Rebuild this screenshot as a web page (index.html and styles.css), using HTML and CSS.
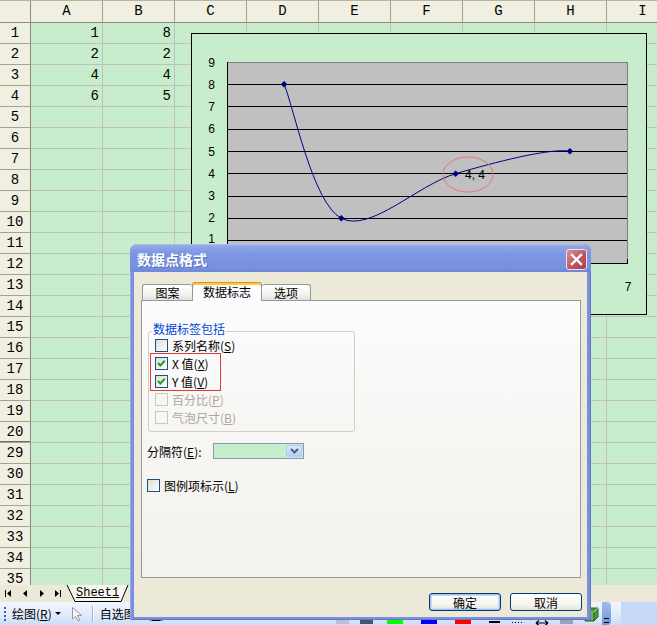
FILE: index.html
```html
<!DOCTYPE html>
<html lang="zh-CN">
<head>
<meta charset="utf-8">
<title>数据点格式</title>
<link rel="stylesheet" href="styles.css">
</head>
<body>
<div class="app">
  <div class="sheet">
    <div class="hrow">
      <div class="corner"></div>
      <div class="ch">A</div><div class="ch">B</div><div class="ch">C</div><div class="ch">D</div><div class="ch">E</div><div class="ch">F</div><div class="ch">G</div><div class="ch">H</div><div class="ch">I</div>
    </div>
    <div class="row"><div class="rh">1</div><div class="c">1</div><div class="c">8</div><div class="c"></div><div class="c"></div><div class="c"></div><div class="c"></div><div class="c"></div><div class="c"></div><div class="c"></div></div>
    <div class="row"><div class="rh">2</div><div class="c">2</div><div class="c">2</div><div class="c"></div><div class="c"></div><div class="c"></div><div class="c"></div><div class="c"></div><div class="c"></div><div class="c"></div></div>
    <div class="row"><div class="rh">3</div><div class="c">4</div><div class="c">4</div><div class="c"></div><div class="c"></div><div class="c"></div><div class="c"></div><div class="c"></div><div class="c"></div><div class="c"></div></div>
    <div class="row"><div class="rh">4</div><div class="c">6</div><div class="c">5</div><div class="c"></div><div class="c"></div><div class="c"></div><div class="c"></div><div class="c"></div><div class="c"></div><div class="c"></div></div>
    <div class="row"><div class="rh">5</div><div class="c"></div><div class="c"></div><div class="c"></div><div class="c"></div><div class="c"></div><div class="c"></div><div class="c"></div><div class="c"></div><div class="c"></div></div>
    <div class="row"><div class="rh">6</div><div class="c"></div><div class="c"></div><div class="c"></div><div class="c"></div><div class="c"></div><div class="c"></div><div class="c"></div><div class="c"></div><div class="c"></div></div>
    <div class="row"><div class="rh">7</div><div class="c"></div><div class="c"></div><div class="c"></div><div class="c"></div><div class="c"></div><div class="c"></div><div class="c"></div><div class="c"></div><div class="c"></div></div>
    <div class="row"><div class="rh">8</div><div class="c"></div><div class="c"></div><div class="c"></div><div class="c"></div><div class="c"></div><div class="c"></div><div class="c"></div><div class="c"></div><div class="c"></div></div>
    <div class="row"><div class="rh">9</div><div class="c"></div><div class="c"></div><div class="c"></div><div class="c"></div><div class="c"></div><div class="c"></div><div class="c"></div><div class="c"></div><div class="c"></div></div>
    <div class="row"><div class="rh">10</div><div class="c"></div><div class="c"></div><div class="c"></div><div class="c"></div><div class="c"></div><div class="c"></div><div class="c"></div><div class="c"></div><div class="c"></div></div>
    <div class="row"><div class="rh">11</div><div class="c"></div><div class="c"></div><div class="c"></div><div class="c"></div><div class="c"></div><div class="c"></div><div class="c"></div><div class="c"></div><div class="c"></div></div>
    <div class="row"><div class="rh">12</div><div class="c"></div><div class="c"></div><div class="c"></div><div class="c"></div><div class="c"></div><div class="c"></div><div class="c"></div><div class="c"></div><div class="c"></div></div>
    <div class="row"><div class="rh">13</div><div class="c"></div><div class="c"></div><div class="c"></div><div class="c"></div><div class="c"></div><div class="c"></div><div class="c"></div><div class="c"></div><div class="c"></div></div>
    <div class="row"><div class="rh">14</div><div class="c"></div><div class="c"></div><div class="c"></div><div class="c"></div><div class="c"></div><div class="c"></div><div class="c"></div><div class="c"></div><div class="c"></div></div>
    <div class="row"><div class="rh">15</div><div class="c"></div><div class="c"></div><div class="c"></div><div class="c"></div><div class="c"></div><div class="c"></div><div class="c"></div><div class="c"></div><div class="c"></div></div>
    <div class="row"><div class="rh">16</div><div class="c"></div><div class="c"></div><div class="c"></div><div class="c"></div><div class="c"></div><div class="c"></div><div class="c"></div><div class="c"></div><div class="c"></div></div>
    <div class="row"><div class="rh">17</div><div class="c"></div><div class="c"></div><div class="c"></div><div class="c"></div><div class="c"></div><div class="c"></div><div class="c"></div><div class="c"></div><div class="c"></div></div>
    <div class="row"><div class="rh">18</div><div class="c"></div><div class="c"></div><div class="c"></div><div class="c"></div><div class="c"></div><div class="c"></div><div class="c"></div><div class="c"></div><div class="c"></div></div>
    <div class="row"><div class="rh">19</div><div class="c"></div><div class="c"></div><div class="c"></div><div class="c"></div><div class="c"></div><div class="c"></div><div class="c"></div><div class="c"></div><div class="c"></div></div>
    <div class="row"><div class="rh hidden-after">20</div><div class="c"></div><div class="c"></div><div class="c"></div><div class="c"></div><div class="c"></div><div class="c"></div><div class="c"></div><div class="c"></div><div class="c"></div></div>
    <div class="row"><div class="rh">29</div><div class="c"></div><div class="c"></div><div class="c"></div><div class="c"></div><div class="c"></div><div class="c"></div><div class="c"></div><div class="c"></div><div class="c"></div></div>
    <div class="row"><div class="rh">30</div><div class="c"></div><div class="c"></div><div class="c"></div><div class="c"></div><div class="c"></div><div class="c"></div><div class="c"></div><div class="c"></div><div class="c"></div></div>
    <div class="row"><div class="rh">31</div><div class="c"></div><div class="c"></div><div class="c"></div><div class="c"></div><div class="c"></div><div class="c"></div><div class="c"></div><div class="c"></div><div class="c"></div></div>
    <div class="row"><div class="rh">32</div><div class="c"></div><div class="c"></div><div class="c"></div><div class="c"></div><div class="c"></div><div class="c"></div><div class="c"></div><div class="c"></div><div class="c"></div></div>
    <div class="row"><div class="rh">33</div><div class="c"></div><div class="c"></div><div class="c"></div><div class="c"></div><div class="c"></div><div class="c"></div><div class="c"></div><div class="c"></div><div class="c"></div></div>
    <div class="row"><div class="rh">34</div><div class="c"></div><div class="c"></div><div class="c"></div><div class="c"></div><div class="c"></div><div class="c"></div><div class="c"></div><div class="c"></div><div class="c"></div></div>
    <div class="row"><div class="rh">35</div><div class="c"></div><div class="c"></div><div class="c"></div><div class="c"></div><div class="c"></div><div class="c"></div><div class="c"></div><div class="c"></div><div class="c"></div></div>
  </div>

  <div class="tabbar">
    <span class="navbtns">
      <svg width="62" height="17" viewBox="0 0 62 17">
        <rect x="5" y="5" width="1" height="7" fill="#000"/>
        <path d="M11 5 L7 8.5 L11 12 Z" fill="#000"/>
        <path d="M27 5 L23 8.5 L27 12 Z" fill="#000"/>
        <path d="M40 5 L44 8.5 L40 12 Z" fill="#000"/>
        <path d="M55 5 L59 8.5 L55 12 Z" fill="#000"/>
        <rect x="60" y="5" width="1" height="7" fill="#000"/>
      </svg>
    </span>
    <span class="sheettab">
      <svg class="tabshape" width="64" height="17" viewBox="0 0 64 17">
        <path d="M1 0 L9 16.5 L55 16.5 L62 0" fill="#F7F6F1" stroke="#000" stroke-width="1"/>
      </svg>
      <span class="tabtext">Sheet1</span>
    </span>
  </div>

  <div class="dock">
    <div class="toolbar">
      <span class="grip"></span>
      <span class="tb-text">绘图(<u>R</u>)</span>
      <span class="tb-drop"></span>
      <span class="tb-icon">
        <svg width="12" height="16" viewBox="0 0 12 16"><path d="M1.5 1.5 L1.5 13 L4.5 10.5 L7 15 L9 14 L6.5 9.5 L10.5 9.5 Z" fill="#F4F4F4" stroke="#9A9A9A" stroke-width="1"/></svg>
      </span>
      <span class="tb-sep"></span>
      <span class="tb-text tb-auto">自选图形(<u>U</u>)</span>
      <span class="tb-stub gray"></span>
      <span class="tb-stub dark"></span>
      <span class="swatch green"></span>
      <span class="swatch blue"></span>
      <span class="swatch red"></span>
      <span class="tb-line"></span>
      <span class="tb-dots"></span>
      <span class="tb-arrow">
        <svg width="14" height="8" viewBox="0 0 14 8"><path d="M1 4 H13 M1 4 L4 1.5 M1 4 L4 6.5 M13 4 L10 1.5 M13 4 L10 6.5" fill="none" stroke="#000" stroke-width="1.2"/></svg>
      </span>
      <span class="tb-stub gray2"></span>
      <span class="cube">
        <svg width="16" height="16" viewBox="0 0 16 16">
          <path d="M2 5 L6 1 L15 1 L15 10 L11 14 L2 14 Z" fill="#4E9A3E" stroke="#2D5E22" stroke-width="1"/>
          <path d="M2 5 L11 5 L15 1" fill="none" stroke="#A8D890" stroke-width="1"/>
          <path d="M11 5 L11 14" stroke="#2D5E22" stroke-width="1"/>
          <rect x="3" y="6" width="7" height="7" fill="#6CB854"/>
        </svg>
      </span>
      <span class="tb-end"><span class="chev"></span></span>
    </div>
  </div>

  <div class="chart">
    <svg width="456" height="282" viewBox="0 0 456 282">
      <rect x="0.5" y="0.5" width="455" height="281" fill="#C7EDCC" stroke="#000"/>
      <rect x="36.5" y="29.5" width="400" height="201" fill="#C0C0C0" stroke="#808080"/>
      <g stroke="#000" stroke-width="1">
        <line x1="37" y1="51.5" x2="436" y2="51.5"/>
        <line x1="37" y1="73.5" x2="436" y2="73.5"/>
        <line x1="37" y1="96.5" x2="436" y2="96.5"/>
        <line x1="37" y1="118.5" x2="436" y2="118.5"/>
        <line x1="37" y1="140.5" x2="436" y2="140.5"/>
        <line x1="37" y1="163.5" x2="436" y2="163.5"/>
        <line x1="37" y1="185.5" x2="436" y2="185.5"/>
        <line x1="37" y1="207.5" x2="436" y2="207.5"/>
        <line x1="36.5" y1="29" x2="36.5" y2="231"/>
        <line x1="36" y1="230.5" x2="437" y2="230.5"/>
        <line x1="436.5" y1="226" x2="436.5" y2="231"/>
      </g>
      <g font-family="Liberation Sans, Arial, sans-serif" font-size="12" fill="#000" text-anchor="end">
        <text x="24" y="34">9</text>
        <text x="24" y="56">8</text>
        <text x="24" y="78">7</text>
        <text x="24" y="100">6</text>
        <text x="24" y="123">5</text>
        <text x="24" y="145">4</text>
        <text x="24" y="167">3</text>
        <text x="24" y="189">2</text>
        <text x="24" y="210">1</text>
      </g>
      <text x="437" y="258" font-family="Liberation Sans, Arial, sans-serif" font-size="12" fill="#000" text-anchor="middle">7</text>
      <path d="M93.1 51.3 C102.6 73.6 121.7 170.4 150.3 185.3 C178.9 200.2 226.5 151.9 264.6 140.7 C302.7 129.5 359.9 114.6 378.9 118.3" fill="none" stroke="#000080" stroke-width="1"/>
      <g fill="#000080">
        <path d="M93.1 48 L96.4 51.3 L93.1 54.6 L89.8 51.3 Z"/>
        <path d="M150.3 182 L153.6 185.3 L150.3 188.6 L147 185.3 Z"/>
        <path d="M264.6 137.4 L267.9 140.7 L264.6 144 L261.3 140.7 Z"/>
        <path d="M378.9 115 L382.2 118.3 L378.9 121.6 L375.6 118.3 Z"/>
      </g>
      <text x="274" y="146" font-family="Liberation Sans, Arial, sans-serif" font-size="12" fill="#000">4, 4</text>
      <ellipse cx="277" cy="141.5" rx="25" ry="17.5" fill="none" stroke="#E87478" stroke-width="1"/>
    </svg>
  </div>

  <div class="dialog">
    <div class="titlebar">
      <span class="title">数据点格式</span>
      <span class="close">
        <svg width="19" height="19" viewBox="0 0 19 19"><path d="M5 5 L14 14 M14 5 L5 14" stroke="#FFFFFF" stroke-width="2.4" stroke-linecap="square"/></svg>
      </span>
    </div>
    <div class="dbody">
      <div class="tabs">
        <div class="tab t1">图案</div>
        <div class="tab t2 active">数据标志</div>
        <div class="tab t3">选项</div>
      </div>
      <div class="panel">
        <div class="group">
          <span class="gtitle">数据标签包括</span>
          <div class="cbrow"><span class="cb"></span><span>系列名称(<u>S</u>)</span></div>
          <div class="hl">
            <div class="cbrow"><span class="cb"><svg width="11" height="11" viewBox="0 0 11 11"><path d="M2 5 L4.3 7.5 L8.8 2.8" fill="none" stroke="#21A121" stroke-width="2"/></svg></span><span>X 值(<u>X</u>)</span></div>
            <div class="cbrow"><span class="cb"><svg width="11" height="11" viewBox="0 0 11 11"><path d="M2 5 L4.3 7.5 L8.8 2.8" fill="none" stroke="#21A121" stroke-width="2"/></svg></span><span>Y 值(<u>V</u>)</span></div>
          </div>
          <div class="cbrow dis"><span class="cb"></span><span>百分比(<u>P</u>)</span></div>
          <div class="cbrow dis"><span class="cb"></span><span>气泡尺寸(<u>B</u>)</span></div>
        </div>
        <div class="seprow">
          <span class="seplabel">分隔符(<u>E</u>):</span>
          <span class="combo">
            <span class="cfield"></span>
            <span class="cbtn"><svg width="9" height="6" viewBox="0 0 9 6"><path d="M1 1 L4.5 4.5 L8 1" fill="none" stroke="#4D6185" stroke-width="2"/></svg></span>
          </span>
        </div>
        <div class="cbrow legendrow"><span class="cb"></span><span>图例项标示(<u>L</u>)</span></div>
      </div>
      <div class="buttons">
        <button class="btn default">确定</button>
        <button class="btn">取消</button>
      </div>
    </div>
  </div>
</div>
</body>
</html>
```

FILE: styles.css
```css
html, body {
  margin: 0;
  padding: 0;
}
body {
  width: 657px;
  height: 625px;
  overflow: hidden;
  background: #ECE9D8;
  font-family: "Noto Sans CJK SC", "Liberation Sans", sans-serif;
  font-size: 12px;
  color: #000;
}
.app {
  position: relative;
  width: 657px;
  height: 625px;
  display: flex;
  flex-direction: column;
  overflow: hidden;
}

/* ---------- sheet grid ---------- */
.sheet {
  height: 585px;
  flex: none;
  overflow: hidden;
  background: #C7EDCC;
}
.hrow {
  display: flex;
  height: 21px;
  border-top: 1px solid #B7B4A4;
  border-bottom: 1px solid #8E8B7B;
  background: #F1EFE2;
}
.corner {
  width: 30px;
  flex: none;
  border-right: 1px solid #8E8B7B;
}
.ch {
  width: 71px;
  flex: none;
  border-right: 1px solid #A5A290;
  text-align: center;
  font: 14px/21px "Liberation Mono", monospace;
}
.row {
  display: flex;
  height: 21px;
}
.rh {
  width: 30px;
  height: 20px;
  flex: none;
  background: #F1EFE2;
  border-right: 1px solid #8E8B7B;
  border-bottom: 1px solid #A5A290;
  text-align: center;
  font: 14px/20px "Liberation Mono", monospace;
}
.rh.hidden-after {
  box-shadow: inset 0 -1px 0 #6F6C60;
}
.c {
  width: 68px;
  height: 20px;
  flex: none;
  padding-right: 3px;
  border-right: 1px solid #C0C0C0;
  border-bottom: 1px solid #C0C0C0;
  text-align: right;
  font: 14px/20px "Liberation Mono", monospace;
}

/* ---------- sheet tabs ---------- */
.tabbar {
  height: 17px;
  flex: none;
  display: flex;
  align-items: flex-start;
  background: #ECE9D8;
}
.navbtns {
  display: block;
  width: 66px;
  height: 17px;
}
.navbtns svg { display: block; }
.sheettab {
  position: relative;
  width: 64px;
  height: 17px;
}
.tabshape {
  position: absolute;
  left: 0;
  top: 0;
}
.tabtext {
  position: relative;
  display: block;
  padding-left: 10px;
  font: 12px/16px "Liberation Mono", monospace;
  text-decoration: underline;
}

/* ---------- drawing toolbar ---------- */
.dock {
  height: 23px;
  flex: none;
  background: #C6D9F7;
  display: flex;
}
.toolbar {
  width: 621px;
  height: 23px;
  display: flex;
  align-items: center;
  background: linear-gradient(#F2F6FE, #E0EAFB 60%, #CCDCF7);
  position: relative;
}
.grip {
  width: 2px;
  height: 14px;
  margin-left: 4px;
  background: repeating-linear-gradient(#3D5FA8 0 2px, transparent 2px 4px);
}
.tb-text {
  margin-left: 6px;
  font-size: 12px;
  line-height: 16px;
  white-space: nowrap;
}
.tb-drop {
  width: 0;
  height: 0;
  margin-left: 3px;
  border-left: 3px solid transparent;
  border-right: 3px solid transparent;
  border-top: 3px solid #000;
}
.tb-icon {
  margin-left: 10px;
  height: 16px;
}
.tb-icon svg { display: block; }
.tb-sep {
  width: 1px;
  height: 16px;
  margin-left: 9px;
  background: #9DB3DB;
  box-shadow: 1px 0 0 #FFFFFF;
}
.tb-auto {
  margin-left: 7px;
  width: 236px;
}
.tb-stub {
  align-self: flex-end;
  height: 4px;
  margin-bottom: 1px;
}
.tb-stub.gray { width: 13px; background: #B8C2D4; margin-left: 0; }
.tb-stub.dark { width: 13px; background: #44556F; margin-left: 11px; }
.swatch {
  align-self: flex-end;
  width: 16px;
  height: 4px;
  margin-bottom: 1px;
}
.swatch.green { background: #00FF00; margin-left: 14px; }
.swatch.blue { background: #0000FF; margin-left: 18px; }
.swatch.red { background: #FF0000; margin-left: 18px; }
.tb-line {
  align-self: flex-end;
  width: 11px;
  height: 2px;
  margin: 0 0 2px 18px;
  background: #000;
}
.tb-dots {
  align-self: flex-end;
  width: 11px;
  height: 1px;
  margin: 0 0 2px 12px;
  background: repeating-linear-gradient(90deg, #000 0 1px, transparent 1px 3px);
}
.tb-arrow {
  align-self: flex-end;
  margin-left: 12px;
  width: 14px;
  height: 8px;
  margin-bottom: -2px;
}
.tb-arrow svg { display: block; }
.tb-stub.gray2 { width: 13px; background: #9AA4B6; margin-left: 11px; }
.cube {
  margin-left: 10px;
  height: 16px;
  margin-top: 2px;
}
.cube svg { display: block; }
.tb-end {
  margin-left: 3px;
  width: 9px;
  height: 23px;
  background: linear-gradient(#9FBDEE, #6F94DA);
  border-radius: 0 4px 4px 0;
  display: flex;
  align-items: flex-end;
  justify-content: center;
}
.chev {
  width: 5px;
  height: 3px;
  margin-bottom: 2px;
  border-top: 1px solid #000;
  border-bottom: 1px solid #000;
}

/* ---------- chart ---------- */
.chart {
  position: absolute;
  left: 191px;
  top: 33px;
  width: 456px;
  height: 282px;
}
.chart svg { display: block; }

/* ---------- dialog ---------- */
.dialog {
  position: absolute;
  left: 130px;
  top: 244px;
  width: 461px;
  height: 376px;
  box-sizing: border-box;
  padding: 0 4px 3px 4px;
  background: #7A8FDD;
  border-radius: 8px 8px 0 0;
  display: flex;
  flex-direction: column;
  box-shadow: inset 1px 0 0 #9AAAE8, inset -1px 0 0 #6377C9, inset 0 -1px 0 #6377C9;
}
.titlebar {
  height: 28px;
  flex: none;
  margin: 0 -4px;
  padding: 0 4px 0 7px;
  border-radius: 8px 8px 0 0;
  background: linear-gradient(#B0C2F2 0, #8FA6E8 2px, #7E96E1 35%, #7890DD 85%, #7087D8 100%);
  display: flex;
  align-items: center;
  justify-content: space-between;
}
.title {
  color: #FFFFFF;
  font-weight: bold;
  font-size: 14px;
  letter-spacing: 0;
  text-shadow: 1px 1px 0 #5E74C4;
  margin-top: 1px;
}
.close {
  width: 21px;
  height: 21px;
  box-sizing: border-box;
  border: 1px solid #F2E2E6;
  border-radius: 3px;
  background: linear-gradient(135deg, #DC9098, #B8525F 60%, #A84451);
  align-self: flex-start;
  margin-top: 5px;
  display: flex;
  align-items: center;
  justify-content: center;
}
.close svg { display: block; }

.dbody {
  flex: 1;
  background: #ECE9D8;
  padding: 10px 6px 0 7px;
  display: flex;
  flex-direction: column;
}
.tabs {
  display: flex;
  height: 18px;
  flex: none;
  padding-left: 1px;
  position: relative;
  z-index: 1;
}
.tab {
  box-sizing: border-box;
  margin-top: 2px;
  height: 16px;
  border: 1px solid #919B9C;
  border-bottom: none;
  border-radius: 3px 3px 0 0;
  background: linear-gradient(#FFFFFF, #F3F3EF 60%, #E3E1D8);
  text-align: center;
  font-size: 12px;
  line-height: 15px;
}
.t1 { width: 50px; border-right: none; }
.t2 { width: 70px; }
.t3 { width: 49px; border-left: none; }
.tab.active {
  margin-top: 0;
  height: 19px;
  background: #FCFCFE;
  border-top: 1px solid #E68B2C;
  box-shadow: inset 0 2px 0 #FFC73C;
  line-height: 17px;
}
.panel {
  height: 278px;
  flex: none;
  box-sizing: border-box;
  border: 1px solid #919B9C;
  background: linear-gradient(#FCFCFE, #F6F5F1 60%, #F3F2EC);
  padding: 0 5px;
}
.group {
  position: relative;
  box-sizing: border-box;
  width: 207px;
  height: 101px;
  margin: 30px 0 0 1px;
  padding: 4px 0 0 6px;
  border: 1px solid #D0D0BF;
  border-radius: 3px;
}
.gtitle {
  position: absolute;
  left: 3px;
  top: -10px;
  padding: 0 1px;
  background: #FBFBFC;
  color: #0046D5;
  font-size: 12px;
  line-height: 14px;
}
.cbrow {
  display: flex;
  align-items: center;
  height: 18px;
  gap: 4px;
  font-size: 12px;
  white-space: nowrap;
}
.cb {
  width: 13px;
  height: 13px;
  flex: none;
  box-sizing: border-box;
  border: 1px solid #1C5180;
  background: linear-gradient(135deg, #DCDCD7, #FFFFFF);
  display: flex;
  align-items: center;
  justify-content: center;
}
.cb svg { display: block; }
.hl {
  width: 65px;
  margin-left: -4px;
  padding-left: 4px;
  outline: 1px solid #E23A3A;
}
.cbrow.dis { color: #ACA899; }
.cbrow.dis .cb {
  border-color: #CAC8BB;
  background: #F7F7F3;
}
.seprow {
  display: flex;
  align-items: center;
  height: 16px;
  margin-top: 11px;
  font-size: 12px;
}
.seplabel {
  width: 66px;
  white-space: nowrap;
}
.combo {
  display: flex;
  box-sizing: border-box;
  width: 91px;
  height: 16px;
  border: 1px solid #7F9DB9;
  background: #C7EDCC;
  padding: 1px;
}
.cfield { flex: 1; }
.cbtn {
  width: 16px;
  height: 12px;
  box-sizing: border-box;
  border: 1px solid #B9CAF2;
  border-radius: 2px;
  background: linear-gradient(#DCE6FD, #BBCDF8);
  display: flex;
  align-items: center;
  justify-content: center;
}
.cbtn svg { display: block; }
.legendrow {
  margin-top: 17px;
}
.buttons {
  display: flex;
  justify-content: flex-end;
  gap: 9px;
  margin-top: 15px;
  margin-right: -1px;
}
.btn {
  width: 72px;
  height: 18px;
  box-sizing: border-box;
  padding: 0;
  border: 1px solid #003C74;
  border-radius: 3px;
  background: linear-gradient(#FFFFFF, #F4F4F0 70%, #E3E0D6);
  font-family: "Noto Sans CJK SC", sans-serif;
  font-size: 12px;
  line-height: 15px;
  color: #000;
}
.btn.default {
  box-shadow: inset 0 0 0 1px #A8C1F0, inset 0 0 0 2px #CEDBF6;
}
```
